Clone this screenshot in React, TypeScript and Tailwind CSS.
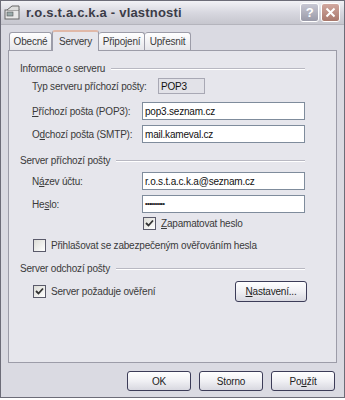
import React from 'react';

const font = "font-['Liberation_Sans',Arial,sans-serif]";

const TextBox = ({ value, readOnly = false, w = 'w-[163px] h-[18px]' }: { value: React.ReactNode; readOnly?: boolean; w?: string }) => (
  <div
    className={`${w} border px-[2px] flex items-center text-[#111] ${
      readOnly ? 'bg-[#e2e2e8] border-[#a8a8b4]' : 'bg-white border-[#7f8c9c]'
    }`}
  >
    {value}
  </div>
);

const Check = ({ checked, label }: { checked: boolean; label: React.ReactNode }) => (
  <div className="flex items-center gap-[5px]">
    <div className="w-[13px] h-[13px] border border-[#5a5a6a] bg-gradient-to-br from-[#dcdcd6] to-white flex items-center justify-center">
      {checked && (
        <svg width="9" height="9" viewBox="0 0 9 9">
          <path d="M1 4 L3.5 6.5 L8 1.5" stroke="#333" strokeWidth="1.8" fill="none" />
        </svg>
      )}
    </div>
    <span>{label}</span>
  </div>
);

const Group = ({ title }: { title: string }) => (
  <div className="flex items-center gap-[6px] pr-[31px]">
    <span className="whitespace-nowrap">{title}</span>
    <div className="flex-1 h-[2px] border-t border-[#b8b8c2] border-b border-b-white" />
  </div>
);

const Row = ({ label, children }: { label: React.ReactNode; children: React.ReactNode }) => (
  <div className="flex items-center pl-[12px]">
    <span className="w-[110px] whitespace-nowrap">{label}</span>
    {children}
  </div>
);

const Btn = ({ children, w = 'w-[64px] h-[20px]' }: { children: React.ReactNode; w?: string }) => (
  <div
    className={`${w} rounded-[3px] border border-[#3c3c58] bg-gradient-to-b from-white via-[#f0f0f4] to-[#d8d8e0] flex items-center justify-center text-[#222]`}
  >
    {children}
  </div>
);

export default function App() {
  return (
    <div className={`w-[345px] h-[400px] bg-white ${font} text-[10px] tracking-[-0.2px] text-[#3a3a3a]`}>
      <div className="w-[345px] h-[398px] border border-[#6c6c78] bg-[#dadae2] flex flex-col">
        {/* title bar */}
        <div className="h-[24px] bg-gradient-to-b from-[#f2f2f6] via-[#d8d8e0] to-[#c6c6ce] flex items-center px-[3px] border-b border-[#b4b4bc]">
          <svg width="18" height="16" viewBox="0 0 18 16" className="mr-[4px]">
            <rect x="1" y="5" width="14" height="9" fill="#e8e8e8" stroke="#666" />
            <rect x="3" y="7" width="6" height="4" fill="#9aa" stroke="#555" strokeWidth="0.6" />
            <path d="M3 5 L8 1 L15 1 L15 5" fill="#ddd" stroke="#666" />
          </svg>
          <span className="font-bold text-[13px] tracking-[0.2px] text-[#3c3c48]">r.o.s.t.a.c.k.a - vlastnosti</span>
          <div className="ml-auto flex gap-[2px] pr-[1px]">
            <div className="w-[19px] h-[19px] rounded-[3px] border border-white bg-gradient-to-b from-[#c8c8d4] to-[#9a9aa8] flex items-center justify-center text-white font-bold text-[13px]">
              ?
            </div>
            <div className="w-[19px] h-[19px] rounded-[3px] border border-white bg-gradient-to-b from-[#d2a8a0] to-[#a8786c] flex items-center justify-center">
              <svg width="11" height="11" viewBox="0 0 11 11">
                <path d="M1.5 1.5 L9.5 9.5 M9.5 1.5 L1.5 9.5" stroke="white" strokeWidth="2" />
              </svg>
            </div>
          </div>
        </div>

        {/* body */}
        <div className="flex-1 flex flex-col px-[7px] pt-[5px]">
          {/* tabs */}
          <div className="flex items-end h-[20px] pl-[1px]">
            <div className="h-[18px] w-[43px] border border-b-0 border-[#9c9ca8] rounded-t-[3px] bg-gradient-to-b from-white to-[#e6e6ea] flex items-center justify-center">
              Obecné
            </div>
            <div className="h-[21px] w-[47px] -mb-px relative z-10 border border-b-0 border-[#9c9ca8] border-t-2 border-t-[#e0b8a8] rounded-t-[3px] bg-[#e6e6ec] flex items-center justify-center">
              Servery
            </div>
            <div className="h-[18px] w-[46px] border border-b-0 border-l-0 border-[#9c9ca8] rounded-t-[3px] bg-gradient-to-b from-white to-[#e6e6ea] flex items-center justify-center">
              Připojení
            </div>
            <div className="h-[18px] w-[46px] border border-b-0 border-l-0 border-[#9c9ca8] rounded-t-[3px] bg-gradient-to-b from-white to-[#e6e6ea] flex items-center justify-center">
              Upřesnit
            </div>
          </div>

          {/* panel */}
          <div className="h-[313px] border border-[#9c9ca8] bg-[#e6e6ec] pt-[10px] pl-[11px] flex flex-col">
            <Group title="Informace o serveru" />
            <div className="mt-[2px]">
              <Row label="Typ serveru příchozí pošty:">
                <TextBox value="POP3" readOnly w="w-[47px] h-[16px] ml-[16px]" />
              </Row>
            </div>
            <div className="flex flex-col gap-[5px] mt-[8px]">
              <Row label={<><u>P</u>říchozí pošta (POP3):</>}>
                <TextBox value="pop3.seznam.cz" />
              </Row>
              <Row label={<>O<u>d</u>chozí pošta (SMTP):</>}>
                <TextBox value="mail.kameval.cz" />
              </Row>
            </div>

            <div className="mt-[10px]">
              <Group title="Server příchozí pošty" />
            </div>
            <div className="flex flex-col gap-[5px] mt-[4px]">
              <Row label={<>N<u>á</u>zev účtu:</>}>
                <TextBox value="r.o.s.t.a.c.k.a@seznam.cz" />
              </Row>
              <Row label={<>He<u>s</u>lo:</>}>
                <TextBox value={<span className="text-[7px] tracking-[-0.5px]">••••••••••</span>} />
              </Row>
            </div>
            <div className="pl-[123px] mt-[3px]">
              <Check checked label={<><u>Z</u>apamatovat heslo</>} />
            </div>
            <div className="pl-[13px] mt-[7px]">
              <Check checked={false} label="Přihlašovat se zabezpečeným ověřováním hesla" />
            </div>

            <div className="mt-[8px]">
              <Group title="Server odchozí pošty" />
            </div>
            <div className="flex items-center pl-[13px] pr-[29px] mt-[5px]">
              <Check checked label="Server požaduje ověření" />
              <div className="ml-auto">
                <Btn w="w-[72px] h-[21px]">
                  <u>N</u>astavení...
                </Btn>
              </div>
            </div>
          </div>

          {/* buttons */}
          <div className="flex justify-end gap-[8px] mt-[8px] pr-[2px]">
            <Btn>OK</Btn>
            <Btn>Storno</Btn>
            <Btn>
              Po<u>u</u>žít
            </Btn>
          </div>
        </div>
      </div>
    </div>
  );
}
